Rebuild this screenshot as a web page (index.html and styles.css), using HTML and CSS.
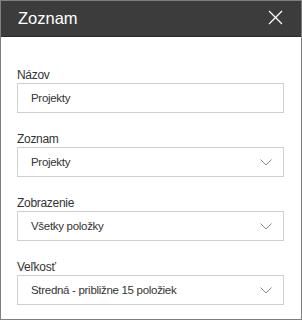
FILE: index.html
```html
<!DOCTYPE html>
<html lang="sk">
<head>
    <meta charset="UTF-8">
    <meta name="viewport" content="width=device-width, initial-scale=1.0">
    <title>Zoznam</title>
    <link rel="stylesheet" href="styles.css">
</head>
<body>
    <div class="panel">
        <div class="panel-header">
            <h1>Zoznam</h1>
            <button class="close-btn" aria-label="Zavrieť">
                <svg width="15" height="15" viewBox="0 0 15 15">
                    <line x1="1" y1="1" x2="14" y2="14" />
                    <line x1="14" y1="1" x2="1" y2="14" />
                </svg>
            </button>
        </div>
        <div class="panel-body">
            <div class="field">
                <label>Názov</label>
                <div class="input">Projekty</div>
            </div>
            <div class="field">
                <label>Zoznam</label>
                <div class="input select">
                    <span>Projekty</span>
                    <svg class="chevron" width="12" height="7" viewBox="0 0 12 7"><polyline points="0.5,0.5 6,6 11.5,0.5" /></svg>
                </div>
            </div>
            <div class="field">
                <label>Zobrazenie</label>
                <div class="input select">
                    <span>Všetky položky</span>
                    <svg class="chevron" width="12" height="7" viewBox="0 0 12 7"><polyline points="0.5,0.5 6,6 11.5,0.5" /></svg>
                </div>
            </div>
            <div class="field">
                <label>Veľkosť</label>
                <div class="input select">
                    <span>Stredná - približne 15 položiek</span>
                    <svg class="chevron" width="12" height="7" viewBox="0 0 12 7"><polyline points="0.5,0.5 6,6 11.5,0.5" /></svg>
                </div>
            </div>
        </div>
    </div>
</body>
</html>
```

FILE: styles.css
```css
body {
    margin: 0;
    font-family: "Liberation Sans", Arial, sans-serif;
    background-color: #ffffff;
}
.panel {
    width: 302px;
    height: 320px;
    box-sizing: border-box;
    border: 1px solid #7f7f7f;
    background-color: #ffffff;
}
.panel-header {
    height: 35px;
    background-color: #3c3c3c;
    border-bottom: 1px solid #2b2b2b;
    display: flex;
    align-items: center;
    justify-content: space-between;
    padding: 0 18px 0 17px;
}
.panel-header h1 {
    margin: 0;
    color: #ffffff;
    font-size: 16.5px;
    font-weight: normal;
    padding-bottom: 1px;
}
.close-btn {
    background: none;
    border: none;
    padding: 0;
    display: flex;
    cursor: pointer;
    margin-top: -2px;
}
.close-btn line {
    stroke: #ffffff;
    stroke-width: 1.3;
}
.panel-body {
    padding: 30px 17px 0 16px;
    display: flex;
    flex-direction: column;
    gap: 18px;
}
.field label {
    display: block;
    font-size: 12px;
    letter-spacing: -0.3px;
    line-height: 16px;
    color: #333333;
}
.input {
    height: 30px;
    box-sizing: border-box;
    border: 1px solid #d0d0d0;
    padding: 0 11px 0 13px;
    display: flex;
    align-items: center;
    justify-content: space-between;
    font-size: 11.5px;
    letter-spacing: -0.3px;
    color: #333333;
}
.chevron polyline {
    fill: none;
    stroke: #8a8a8a;
    stroke-width: 1;
}
```
